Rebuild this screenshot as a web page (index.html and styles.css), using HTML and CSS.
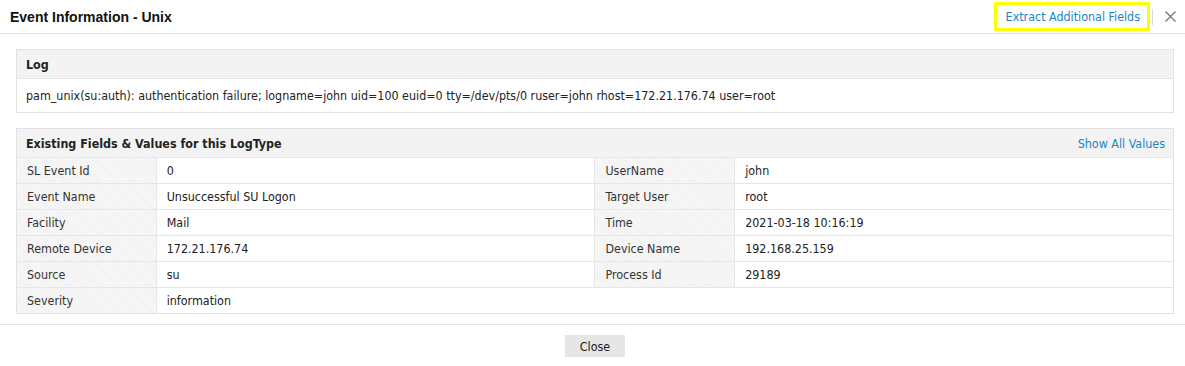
FILE: index.html
```html
<!DOCTYPE html>
<html lang="en">

<head>
    <meta charset="UTF-8">
    <title>Event Information - Unix</title>
    <link rel="stylesheet" href="styles.css">
</head>

<body>
    <div class="dialog">
        <div class="dialog-header">
            <h2>Event Information - Unix</h2>
            <div class="header-actions">
                <a href="#" class="extract-link">Extract Additional Fields</a>
                <span class="divider"></span>
                <svg class="close-x" width="11" height="11" viewBox="0 0 11 11">
                    <path d="M0.5 0.5 L10.5 10.5 M10.5 0.5 L0.5 10.5" stroke="#777" stroke-width="1.3" fill="none" />
                </svg>
            </div>
        </div>

        <div class="dialog-body">
            <div class="panel">
                <div class="panel-head">Log</div>
                <div class="log-text">pam_unix(su:auth): authentication failure; logname=john uid=100 euid=0 tty=/dev/pts/0 ruser=john rhost=172.21.176.74 user=root</div>
            </div>

            <div class="panel">
                <div class="panel-head">
                    <span>Existing Fields &amp; Values for this LogType</span>
                    <a href="#" class="show-all">Show All Values</a>
                </div>
                <table class="fields">
                    <tr>
                        <td class="lbl">SL Event Id</td><td class="val">0</td>
                        <td class="lbl">UserName</td><td class="val">john</td>
                    </tr>
                    <tr>
                        <td class="lbl">Event Name</td><td class="val">Unsuccessful SU Logon</td>
                        <td class="lbl">Target User</td><td class="val">root</td>
                    </tr>
                    <tr>
                        <td class="lbl">Facility</td><td class="val">Mail</td>
                        <td class="lbl">Time</td><td class="val">2021-03-18 10:16:19</td>
                    </tr>
                    <tr>
                        <td class="lbl">Remote Device</td><td class="val">172.21.176.74</td>
                        <td class="lbl">Device Name</td><td class="val">192.168.25.159</td>
                    </tr>
                    <tr>
                        <td class="lbl">Source</td><td class="val">su</td>
                        <td class="lbl">Process Id</td><td class="val">29189</td>
                    </tr>
                    <tr>
                        <td class="lbl">Severity</td><td class="val no-edge">information</td>
                        <td class="empty" colspan="2"></td>
                    </tr>
                </table>
            </div>
        </div>

        <div class="dialog-footer">
            <button class="btn">Close</button>
        </div>
    </div>
</body>

</html>
```

FILE: styles.css
```css
body {
    margin: 0;
    background-color: white;
    font-family: "DejaVu Sans", Verdana, sans-serif;
    font-stretch: condensed;
    font-size: 12.4px;
    color: #222;
}

.dialog {
    width: 1185px;
    height: 366px;
    background-color: white;
}

.dialog-header {
    display: flex;
    align-items: center;
    justify-content: space-between;
    height: 33px;
    border-bottom: 1px solid #e4e4e4;
    padding: 0 0 0 10px;
}

.dialog-header h2 {
    margin: 0;
    font-family: "Liberation Sans", Arial, sans-serif;
    font-stretch: normal;
    font-size: 14px;
    font-weight: bold;
    color: #111;
}

.header-actions {
    display: flex;
    align-items: center;
    height: 33px;
}

.extract-link {
    display: flex;
    align-items: center;
    height: 23px;
    padding: 0 7px 0 9px;
    margin-right: 2px;
    border: 3px solid #ffff00;
    color: #1a84c6;
    text-decoration: none;
}

.divider {
    width: 1px;
    height: 16px;
    background-color: #d8d8d8;
    margin-right: 12px;
}

.close-x {
    margin-right: 9px;
}

.dialog-body {
    padding: 15px 11px 10px 16px;
}

.panel {
    border: 1px solid #e2e2e2;
    margin-bottom: 15px;
}

.panel:last-child {
    margin-bottom: 0;
}

.panel-head {
    display: flex;
    align-items: center;
    justify-content: space-between;
    height: 28px;
    padding: 0 8px 0 9px;
    background-color: #f3f3f3;
    border-bottom: 1px solid #e6e6e6;
    font-weight: bold;
    color: #222;
}

.show-all {
    font-weight: normal;
    color: #1a84c6;
    text-decoration: none;
}

.log-text {
    height: 33px;
    line-height: 33px;
    padding-left: 9px;
}

.fields {
    width: 100%;
    border-collapse: collapse;
}

.fields td {
    height: 25px;
    padding: 0 0 0 10px;
    border-bottom: 1px solid #e6e6e6;
    border-right: 1px solid #e6e6e6;
}

.fields tr:last-child td {
    border-bottom: none;
}

.fields td:last-child,
.fields td.no-edge {
    border-right: none;
}

.fields .lbl {
    width: 129px;
    color: #333;
    background-color: #f7f7f7;
    background-image: repeating-linear-gradient(45deg, #f0f0f0 0, #f0f0f0 1px, transparent 1px, transparent 3px);
}

.fields .val {
    width: 429px;
}

.dialog-footer {
    border-top: 1px solid #e4e4e4;
    display: flex;
    justify-content: center;
    padding-top: 10px;
}

.btn {
    width: 60px;
    height: 22px;
    border: none;
    background-color: #e6e6e6;
    font-family: "DejaVu Sans", Verdana, sans-serif;
    font-stretch: condensed;
    font-size: 12.4px;
    color: #222;
    margin-left: 5px;
}
```
